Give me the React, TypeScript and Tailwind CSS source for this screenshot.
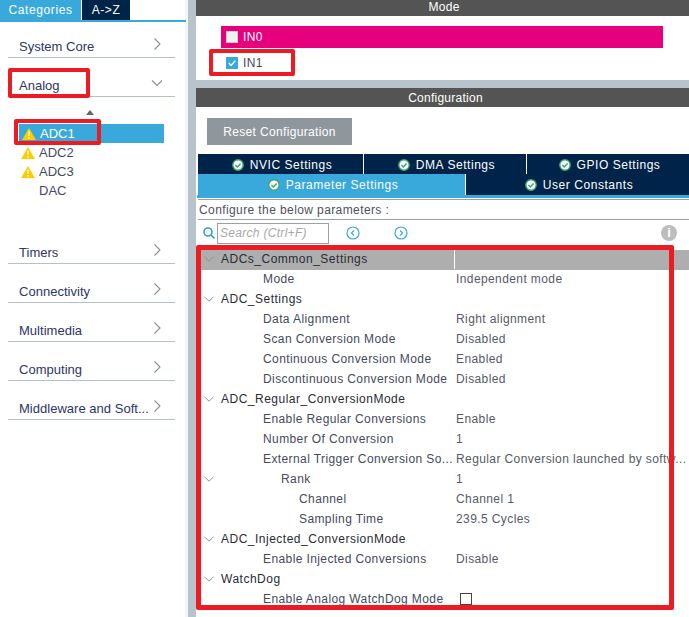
const font = "[font-family:'Liberation_Sans',Arial,sans-serif]";

const Chevron = ({ open = false, className = "" }: { open?: boolean; className?: string }) => (
  <svg width="12" height="12" viewBox="0 0 12 12" fill="none" stroke="#8a8f94" strokeWidth="1.1" className={className}>
    {open ? <path d="M1 3.5 6 8.5 11 3.5" /> : <path d="M3.5 .5 9 6 3.5 11.5" />}
  </svg>
);

const Warning = () => (
  <svg width="14" height="12" viewBox="0 0 14 12" className="shrink-0">
    <path d="M7 0 14 12H0Z" fill="#ffcc00" />
    <path d="M6.3 3.5h1.4L7.5 8h-1Z M6.3 9h1.4v1.5H6.3Z" fill="#fff" />
  </svg>
);

const TabCheck = () => (
  <svg width="12" height="12" viewBox="0 0 12 12" className="shrink-0">
    <circle cx="6" cy="6" r="5.2" fill="#fff" stroke="#3aa66b" strokeWidth="1.4" />
    <path d="M3.4 6 5.3 8 8.6 4.4" fill="none" stroke="#3aa66b" strokeWidth="1.5" />
  </svg>
);

const Category = ({ label, open, mt }: { label: string; open?: boolean; mt: string }) => (
  <div className={`${mt} mx-2 flex h-[20px] w-[167px] items-center justify-between border-b border-[#b4c0c9] box-content pb-0`}>
    <span className="pl-[11px] text-[13px] tracking-[0.02px] text-[#2c3668] whitespace-nowrap">{label}</span>
    <Chevron open={open} className="mr-[12px] -mt-[7px]" />
  </div>
);

const TreeItem = ({ label, warn, active }: { label: string; warn?: boolean; active?: boolean }) => (
  <div className={`flex h-[19px] w-[145px] items-center ${active ? "bg-[#39a9dc] text-white" : "text-[#444a66]"}`}>
    <span className={`flex shrink-0 justify-start ${active ? "w-[21px] pl-[3px]" : "w-[20px] pl-[2px]"}`}>{warn && <Warning />}</span>
    <span className="text-[13px]">{label}</span>
  </div>
);

const NavTab = ({ label, className, active }: { label: string; className: string; active?: boolean }) => (
  <div className={`flex items-center justify-center gap-[6px] pl-[3px] text-[12px] tracking-[0.55px] text-white ${active ? "bg-[#39a9dc]" : "bg-[#002349] pt-px"} ${className}`}>
    <TabCheck />
    <span>{label}</span>
  </div>
);

type RowData = {
  name: string;
  value?: string;
  indent: string;
  chevron?: boolean;
  section?: boolean;
  check?: boolean;
  head?: boolean;
};

const rows: RowData[] = [
  { name: "ADCs_Common_Settings", indent: "pl-[20px]", chevron: true, section: true, head: true },
  { name: "Mode", value: "Independent mode", indent: "pl-[62px]" },
  { name: "ADC_Settings", indent: "pl-[20px]", chevron: true, section: true },
  { name: "Data Alignment", value: "Right alignment", indent: "pl-[62px]" },
  { name: "Scan Conversion Mode", value: "Disabled", indent: "pl-[62px]" },
  { name: "Continuous Conversion Mode", value: "Enabled", indent: "pl-[62px]" },
  { name: "Discontinuous Conversion Mode", value: "Disabled", indent: "pl-[62px]" },
  { name: "ADC_Regular_ConversionMode", indent: "pl-[20px]", chevron: true, section: true },
  { name: "Enable Regular Conversions", value: "Enable", indent: "pl-[62px]" },
  { name: "Number Of Conversion", value: "1", indent: "pl-[62px]" },
  { name: "External Trigger Conversion So...", value: "Regular Conversion launched by softw...", indent: "pl-[62px]" },
  { name: "Rank", value: "1", indent: "pl-[80px]", chevron: true },
  { name: "Channel", value: "Channel 1", indent: "pl-[98px]" },
  { name: "Sampling Time", value: "239.5 Cycles", indent: "pl-[98px]" },
  { name: "ADC_Injected_ConversionMode", indent: "pl-[20px]", chevron: true, section: true },
  { name: "Enable Injected Conversions", value: "Disable", indent: "pl-[62px]" },
  { name: "WatchDog", indent: "pl-[20px]", chevron: true, section: true },
  { name: "Enable Analog WatchDog Mode", indent: "pl-[62px]", check: true },
];

const Row = ({ row }: { row: RowData }) => (
  <div className={`relative flex h-5 items-center pb-[2px] text-[12px] tracking-[0.4px] ${row.head ? "bg-[#aeaeae]" : ""}`}>
    {row.chevron && <Chevron open className="absolute left-[2px] top-[3px] scale-90" />}
    <div className={`w-[253px] shrink-0 whitespace-nowrap ${row.indent} ${row.section ? "tracking-[0.5px] text-[#2b2b33]" : "text-[#454a5c]"}`}>{row.name}</div>
    {row.head && <div className="h-[20px] w-px bg-white" />}
    {row.value && <div className="whitespace-nowrap pl-[2px] text-[#565a66]">{row.value}</div>}
    {row.check && <div className="ml-[6px] h-[12px] w-[12px] border border-[#444]" />}
  </div>
);

export default function App() {
  return (
    <div className={`relative flex h-[617px] w-[689px] overflow-hidden bg-white ${font}`}>
      <aside className="h-full w-[188px] shrink-0 border-r-[3px] border-[#f4f5f6] bg-white">
        <div className="flex h-5 items-end">
          <div className="flex h-5 w-[81px] items-center justify-center bg-[#39a9dc] text-[12px] tracking-[0.6px] text-white">Categories</div>
          <div className="ml-px flex h-5 w-[48px] items-center justify-center bg-[#002349] text-[12px] tracking-[0.6px] text-white">A-&gt;Z</div>
        </div>
        <div className="h-[2px] w-[186px] bg-[#39a9dc]" />
        <Category label="System Core" mt="mt-[15px]" />
        <div className="relative">
          <Category label="Analog" open mt="mt-[18px]" />
          <div className="absolute left-[8px] top-[-8px] h-[30px] w-[82px] rounded-[2px] border-[4px] border-[#ed1c24]" />
        </div>
        <div className="ml-[86px] mt-[13px] h-0 w-0 border-x-[4px] border-b-[5px] border-x-transparent border-b-[#666]" />
        <div className="relative ml-[19px] mt-[9px]">
          <TreeItem label="ADC1" warn active />
          <TreeItem label="ADC2" warn />
          <TreeItem label="ADC3" warn />
          <TreeItem label="DAC" />
          <div className="absolute -left-[5px] -top-[5px] h-[26px] w-[87px] rounded-[2px] border-[4px] border-[#ed1c24]" />
        </div>
        <Category label="Timers" mt="mt-[43px]" />
        <Category label="Connectivity" mt="mt-[18px]" />
        <Category label="Multimedia" mt="mt-[18px]" />
        <Category label="Computing" mt="mt-[18px]" />
        <Category label="Middleware and Soft..." mt="mt-[18px]" />
      </aside>

      <div className="h-full w-[8px] shrink-0 bg-[#b8c4cc]" />

      <main className="relative min-w-0 flex-1">
        <div className="flex h-4 items-center justify-center bg-[#545454] pb-[2px] pl-[3px] text-[12px] tracking-[0.3px] text-white">Mode</div>
        <div className="relative h-[64px] bg-white">
          <div className="absolute left-[25px] top-[10px] flex h-[22px] w-[442px] items-center bg-[#e6007e] pb-px pl-[5px] text-[12px] tracking-[0.4px] text-white">
            <span className="mr-[5px] h-[12px] w-[12px] border border-[#ccc] bg-[#f0f0f0]" />
            IN0
          </div>
          <div className="absolute left-[30px] top-[38px] flex items-center text-[12px] tracking-[0.4px] text-[#445]">
            <span className="mr-[5px] flex h-[12px] w-[12px] items-center justify-center bg-[#39a9dc]">
              <svg width="10" height="10" viewBox="0 0 10 10" fill="none" stroke="#fff" strokeWidth="1.4"><path d="M1.8 5 4 7.4 8.4 2.6" /></svg>
            </span>
            IN1
          </div>
          <div className="absolute left-[13px] top-[33px] h-[27px] w-[86px] rounded-[2px] border-[4px] border-[#ed1c24]" />
        </div>
        <div className="h-[8px] bg-[#b8c4cc]" />
        <div className="flex h-[19px] items-center justify-center bg-[#545454] pl-[6px] text-[12px] tracking-[0.25px] text-white">Configuration</div>
        <button className="ml-[11px] mt-[11px] block h-[27px] w-[145px] bg-[#8f979d] text-[12px] tracking-[0.35px] text-white">Reset Configuration</button>
        <div className="ml-[2px] mt-[9px] flex h-[20px] gap-px">
          <NavTab label="NVIC Settings" className="w-[165px]" />
          <NavTab label="DMA Settings" className="w-[162px]" />
          <NavTab label="GPIO Settings" className="flex-1" />
        </div>
        <div className="ml-[2px] flex h-[21px] gap-px">
          <NavTab label="Parameter Settings" className="w-[267px]" active />
          <NavTab label="User Constants" className="flex-1" />
        </div>
        <div className="ml-[1px] h-[3px] bg-[#39a9dc]" />
        <div className="ml-[2px] mt-px flex h-[21px] items-center border-y border-[#9aa0a6] text-[12px] tracking-[0.4px] text-[#50505c]">
          <span className="pl-px">Configure the below parameters :</span>
        </div>
        <div className="relative flex h-[30px] items-center pb-[4px]">
          <svg width="14" height="14" viewBox="0 0 14 14" fill="none" stroke="#2f9bd8" strokeWidth="1.6" className="ml-[6px]">
            <circle cx="6" cy="6" r="4" /><path d="M9 9 12.5 12.5" />
          </svg>
          <div className="ml-px flex h-[21px] w-[112px] items-center border border-[#9aa0a6] pl-[2px] text-[12px] italic tracking-[0.3px] text-[#a8a8a8]">Search (Ctrl+F)</div>
          <svg width="14" height="14" viewBox="0 0 14 14" fill="none" stroke="#3aa9de" strokeWidth="1.2" className="ml-[17px]">
            <circle cx="7" cy="7" r="6" /><path d="M8 4.5 5.5 7 8 9.5" />
          </svg>
          <svg width="14" height="14" viewBox="0 0 14 14" fill="none" stroke="#3aa9de" strokeWidth="1.2" className="ml-[34px]">
            <circle cx="7" cy="7" r="6" /><path d="M6 4.5 8.5 7 6 9.5" />
          </svg>
          <div className="absolute left-[465px] top-[5px] flex h-4 w-4 items-center justify-center rounded-full bg-[#bdbdbd] text-[13px] font-bold text-white">i</div>
        </div>
        <div className="relative ml-[5px]">
          {rows.map((row) => (
            <Row key={row.name} row={row} />
          ))}
        </div>
        <div className="pointer-events-none absolute left-0 top-[245px] h-[365px] w-[478px] rounded-[2px] border-[5px] border-[#ed1c24]" />
      </main>
    </div>
  );
}
